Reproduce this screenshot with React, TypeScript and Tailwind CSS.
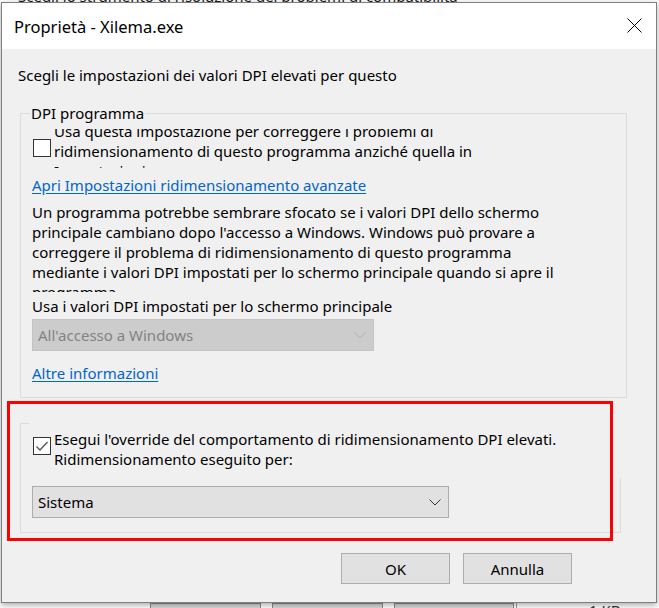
import React from "react";

function Checkbox({ checked = false }: { checked?: boolean }) {
  return (
    <div className="w-[18px] h-[18px] shrink-0 border border-[#333333] bg-white">
      {checked && (
        <svg width="16" height="16" viewBox="0 0 16 16" className="block">
          <path d="M2.5 8.5 L6 12 L13.5 4" fill="none" stroke="#555555" strokeWidth="1.3" />
        </svg>
      )}
    </div>
  );
}

function Chevron({ color }: { color: string }) {
  return (
    <svg width="12" height="7" viewBox="0 0 12 7" className="block shrink-0">
      <path d="M0.5 0.5 L6 6 L11.5 0.5" fill="none" stroke={color} strokeWidth="1" />
    </svg>
  );
}

function Button({ label }: { label: string }) {
  return (
    <button className="w-[109px] h-[31px] flex items-center justify-center border border-[#adadad] bg-[#e1e1e1] text-[15px] leading-[20px] text-black">
      {label}
    </button>
  );
}

export default function App() {
  return (
    <div className="relative w-[659px] h-[608px] overflow-hidden bg-white font-['Noto_Sans',sans-serif] text-black">
      {/* window underneath */}
      <div className="flex h-full flex-col justify-between">
        <div className="-mt-[14px] pl-[18px] text-[15px] leading-[20px] text-[#1a1a1a] whitespace-nowrap">
          Scegli lo strumento di risoluzione dei problemi di compatibilità
        </div>
        <div className="flex h-[5px] items-start overflow-hidden">
          <div className="ml-[150px] h-[8px] w-[111px] border border-[#8c8c8c] bg-[#d9d9d9]" />
          <div className="ml-[11px] h-[8px] w-[111px] border border-[#8c8c8c] bg-[#d9d9d9]" />
          <div className="ml-[11px] h-[8px] w-[120px] border border-[#8c8c8c] bg-[#d9d9d9]" />
          <div className="ml-[2px] h-[8px] w-px bg-[#a0a0a0]" />
          <div className="ml-[72px] -mt-[3px] text-[15px] leading-[20px] text-[#333]">1 KB</div>
        </div>
      </div>

      {/* dialog */}
      <div className="absolute left-[1px] top-[2px] flex h-[601px] w-[656px] flex-col border border-[#7f7f7f] bg-[#f0f0f0] shadow-[0_2px_6px_rgba(0,0,0,0.35)]">
        <div className="flex h-[46px] shrink-0 items-start bg-white pl-[12px] pr-[14px] pt-[13px]">
          <span className="text-[16.5px] leading-[22px] whitespace-nowrap">Proprietà - Xilema.exe</span>
          <svg width="15" height="15" viewBox="0 0 15 15" className="ml-auto mt-[2px] block">
            <path d="M0.5 0.5 L14.5 14.5 M14.5 0.5 L0.5 14.5" stroke="#000" strokeWidth="1" />
          </svg>
        </div>

        <div className="relative flex-1 text-[15px] leading-[20px]">
          <div className="ml-[16px] mt-[16px] whitespace-nowrap">
            Scegli le impostazioni dei valori DPI elevati per questo
          </div>

          <fieldset className="ml-[18px] mt-[18px] w-[607px] border border-[#dcdcdc] pl-[11px] pb-[14px]">
            <legend className="-ml-[2px] px-[1px] leading-[20px]">DPI programma</legend>

            <div className="mt-[6px] flex h-[39px] items-start">
              <div className="ml-[1px] mt-[10px]">
                <Checkbox />
              </div>
              <div className="ml-[3px] h-[39px] overflow-hidden whitespace-nowrap">
                <div className="-mt-[8px]">
                  Usa questa impostazione per correggere i problemi di
                  <br />
                  ridimensionamento di questo programma anziché quella in
                  <br />
                  Impostazioni
                </div>
              </div>
            </div>

            <div className="mt-[7px]">
              <span className="text-[#0066cc] underline underline-offset-[2px]">
                Apri Impostazioni ridimensionamento avanzate
              </span>
            </div>

            <div className="mt-[7px] h-[90px] overflow-hidden whitespace-nowrap">
              Un programma potrebbe sembrare sfocato se i valori DPI dello schermo
              <br />
              principale cambiano dopo l'accesso a Windows. Windows può provare a
              <br />
              correggere il problema di ridimensionamento di questo programma
              <br />
              mediante i valori DPI impostati per lo schermo principale quando si apre il
              <br />
              programma
            </div>

            <div className="mt-[4px] whitespace-nowrap">
              Usa i valori DPI impostati per lo schermo principale
            </div>

            <div className="mt-[3px] flex h-[32px] w-[342px] items-center border border-[#c4c4c4] bg-[#cccccc] pl-[5px] pr-[7px]">
              <span className="text-[#838383]">All'accesso a Windows</span>
              <span className="ml-auto">
                <Chevron color="#b0b0b0" />
              </span>
            </div>

            <div className="mt-[12px]">
              <span className="text-[#0066cc] underline underline-offset-[2px]">Altre informazioni</span>
            </div>
          </fieldset>

          <div className="relative ml-[18px] mt-[25px] w-[601px] border-b border-l border-[#dcdcdc] pb-[14px] pl-[12px] pt-[6px]">
            <span className="absolute -left-[1px] top-0 h-px w-[9px] bg-[#dcdcdc]" />
            <span className="absolute bottom-0 right-0 top-[55px] w-px bg-[#dcdcdc]" />

            <div className="flex items-start">
              <div className="mt-[8px]">
                <Checkbox checked />
              </div>
              <div className="ml-[3px] whitespace-nowrap">
                Esegui l'override del comportamento di ridimensionamento DPI elevati.
                <br />
                Ridimensionamento eseguito per:
              </div>
            </div>

            <div className="-ml-[1px] mt-[17px] flex h-[32px] w-[417px] items-center border border-[#adadad] bg-[#e1e1e1] pl-[5px] pr-[7px]">
              <span>Sistema</span>
              <span className="ml-auto">
                <Chevron color="#333333" />
              </span>
            </div>
          </div>

          <div className="mt-[20px] flex justify-end gap-[13px] pr-[84px]">
            <Button label="OK" />
            <Button label="Annulla" />
          </div>

          {/* red annotation frame */}
          <div className="pointer-events-none absolute left-[5px] top-[352px] h-[140px] w-[606px] border-[3px] border-[#ff0000]" />
        </div>
      </div>
    </div>
  );
}
